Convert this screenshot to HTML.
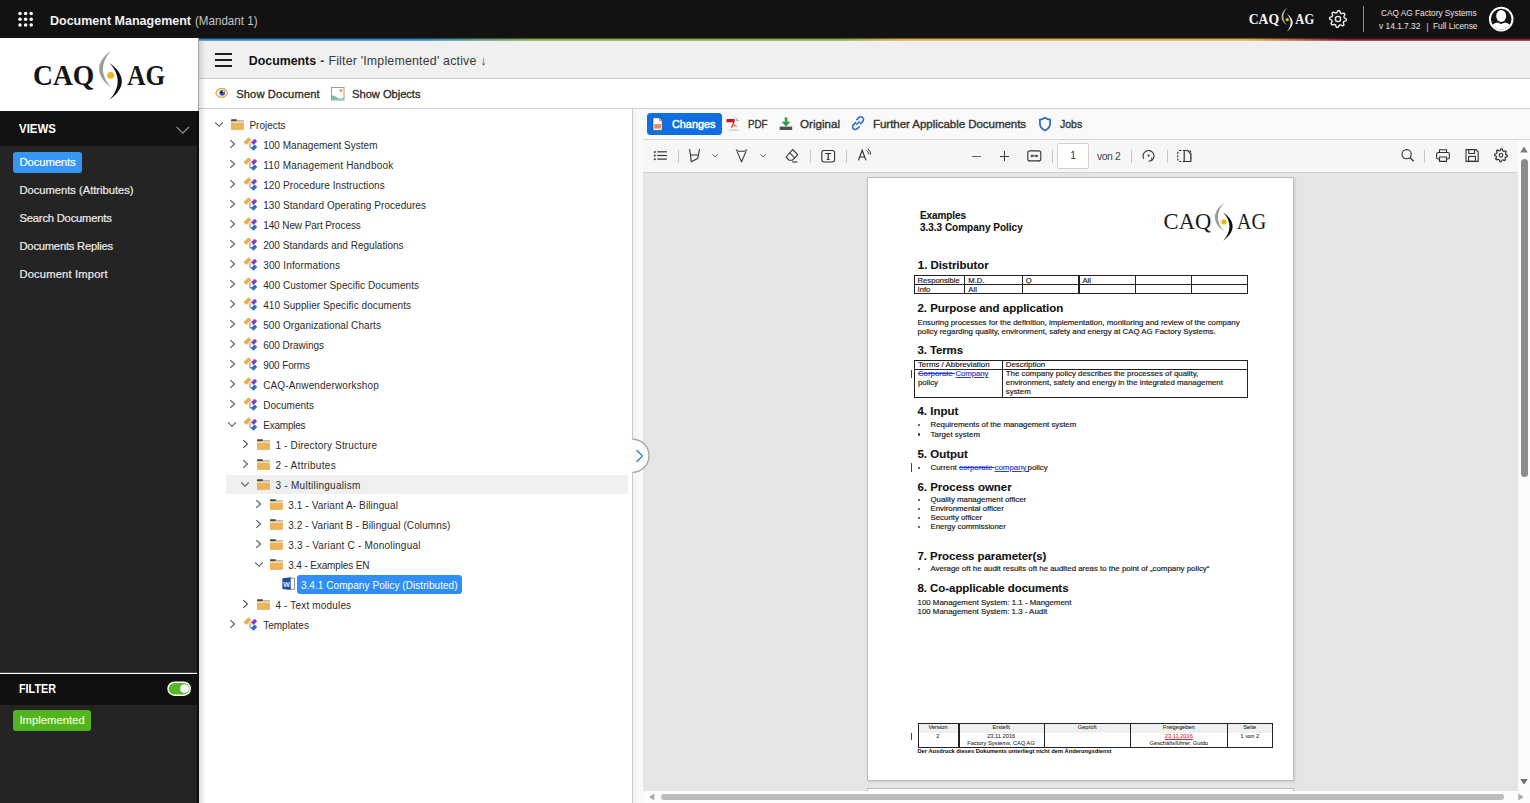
<!DOCTYPE html>
<html><head><meta charset="utf-8"><style>
html,body{margin:0;padding:0;width:1530px;height:803px;overflow:hidden;background:#fff;position:relative}
.t{position:absolute;white-space:nowrap}
svg{overflow:visible}
</style></head><body>
<div style="position:absolute;left:0px;top:0px;width:1530px;height:38px;background:#121212;"></div><svg style="position:absolute;left:0px;top:0px;" width="40" height="38" viewBox="0 0 40 38"><circle cx="20" cy="13.5" r="1.75" fill="#fff"/><circle cx="20" cy="19.2" r="1.75" fill="#fff"/><circle cx="20" cy="25" r="1.75" fill="#fff"/><circle cx="25.6" cy="13.5" r="1.75" fill="#fff"/><circle cx="25.6" cy="19.2" r="1.75" fill="#fff"/><circle cx="25.6" cy="25" r="1.75" fill="#fff"/><circle cx="31.2" cy="13.5" r="1.75" fill="#fff"/><circle cx="31.2" cy="19.2" r="1.75" fill="#fff"/><circle cx="31.2" cy="25" r="1.75" fill="#fff"/></svg><svg style="position:absolute;left:0;top:0" width="1530" height="803"><g transform="translate(1232.4,-17.6) scale(0.495)"><text x="33" y="84.5" font-family="Liberation Serif" font-weight="bold" font-size="28.6" fill="#f5f5f5" textLength="61.3" lengthAdjust="spacingAndGlyphs">CAQ</text><text x="127.2" y="84.5" font-family="Liberation Serif" font-weight="bold" font-size="28.6" fill="#f5f5f5" textLength="37.9" lengthAdjust="spacingAndGlyphs">AG</text><path d="M111.1,50.6 C95.1,62.6 95.1,75.6 111.1,87.6 C100.2,75.6 100.2,62.6 111.1,50.6Z" fill="#b5b5b5"/><path d="M109.6,62.9 C126,74.9 126,87.6 109.6,99.6 C120.5,87.6 120.5,74.9 109.6,62.9Z" fill="#f0f0f0"/><circle cx="110.7" cy="75.3" r="3.4" fill="#f2b21a"/></g></svg><svg style="position:absolute;left:1320px;top:0px;" width="40" height="38" viewBox="0 0 40 38"><path d="M18.00,10.60 L19.64,10.76 L20.45,13.09 L21.56,13.68 L23.94,13.06 L24.98,14.33 L23.91,16.55 L24.28,17.75 L26.40,19.00 L26.24,20.64 L23.91,21.45 L23.32,22.56 L23.94,24.94 L22.67,25.98 L20.45,24.91 L19.25,25.28 L18.00,27.40 L16.36,27.24 L15.55,24.91 L14.44,24.32 L12.06,24.94 L11.02,23.67 L12.09,21.45 L11.72,20.25 L9.60,19.00 L9.76,17.36 L12.09,16.55 L12.68,15.44 L12.06,13.06 L13.33,12.02 L15.55,13.09 L16.75,12.72Z" fill="none" stroke="#f0f0f0" stroke-width="1.4" stroke-linejoin="round"/><circle cx="18" cy="19" r="2.6" fill="none" stroke="#f0f0f0" stroke-width="1.4"/></svg><div style="position:absolute;left:1362.5px;top:6px;width:1.5px;height:26px;background:#8a8a8a;"></div><svg style="position:absolute;left:1486px;top:4px;" width="32" height="32" viewBox="0 0 32 32"><circle cx="15.2" cy="15.1" r="11.3" fill="#121212" stroke="#fff" stroke-width="2"/><clipPath id="avc"><circle cx="15.2" cy="15.1" r="10.3"/></clipPath><g clip-path="url(#avc)" fill="#fff"><ellipse cx="15.2" cy="12" rx="5" ry="6"/><path d="M2,30 C2.5,21.5 7.5,19.5 11.5,18.6 L15.2,20 L18.9,18.6 C22.9,19.5 27.9,21.5 28.4,30Z"/></g></svg><div style="position:absolute;left:199px;top:38px;width:1331px;height:3px;background:linear-gradient(90deg,#3282c0 0%,#3282c0 16%,#86a94f 25%,#86a94f 48%,#e2a850 53%,#e2a850 79%,#8a1c30 86%,#8a1c30 100%);"></div><div style="position:absolute;left:199px;top:38px;width:1331px;height:3px;background:linear-gradient(180deg,rgba(0,0,0,0.45) 0%,rgba(0,0,0,0.45) 33.3%,rgba(0,0,0,0) 33.3%,rgba(0,0,0,0) 66.6%,rgba(255,255,255,0.22) 66.6%);"></div><div style="position:absolute;left:199px;top:41px;width:1331px;height:1px;background:rgba(255,255,255,0.75);"></div><div style="position:absolute;left:0px;top:38px;width:198px;height:73px;background:#ffffff;"></div><div style="position:absolute;left:0px;top:111px;width:198px;height:35px;background:#121212;"></div><div style="position:absolute;left:0px;top:146px;width:198px;height:526px;background:#242424;"></div><div style="position:absolute;left:0px;top:672px;width:197px;height:1px;background:#474747;"></div><div style="position:absolute;left:0px;top:673.5px;width:198px;height:31px;background:#101010;"></div><div style="position:absolute;left:0px;top:704.5px;width:198px;height:99px;background:#242424;"></div><svg style="position:absolute;left:170px;top:120px;" width="24" height="20" viewBox="0 0 24 20"><path d="M6.5,6.8 L12.8,13.1 L19,6.8" fill="none" stroke="#9a9a9a" stroke-width="1.1"/></svg><div style="position:absolute;left:12.8px;top:152px;width:69px;height:21px;background:#3596f5;border-radius:3px"></div><svg style="position:absolute;left:166px;top:680px;" width="28" height="18" viewBox="0 0 28 18"><rect x="2" y="2.2" width="22.3" height="13" rx="6.5" fill="#58b82a" stroke="#ffffff" stroke-width="1.4"/><circle cx="18.5" cy="8.7" r="4.4" fill="#fff"/></svg><div style="position:absolute;left:13px;top:710px;width:78px;height:21px;background:#52b51f;border-radius:3px"></div><div style="position:absolute;left:199px;top:41px;width:1331px;height:37px;background:#f0f0f0;"></div><div style="position:absolute;left:199px;top:78px;width:1331px;height:1px;background:#c9c9c9;"></div><div style="position:absolute;left:199px;top:79px;width:1331px;height:29px;background:#ffffff;"></div><div style="position:absolute;left:199px;top:108px;width:1331px;height:1px;background:#d0d0d0;"></div><div style="position:absolute;left:198px;top:38px;width:1px;height:765px;background:#a6a6a6;"></div><div style="position:absolute;left:196.8px;top:111px;width:1.8px;height:692px;background:#0e0e0e;"></div><div style="position:absolute;left:199px;top:41px;width:7px;height:762px;background:linear-gradient(90deg,rgba(0,0,0,0.13),rgba(0,0,0,0));"></div><svg style="position:absolute;left:0;top:0" width="1530" height="803"><g transform="translate(0,0) scale(1)"><text x="33" y="84.5" font-family="Liberation Serif" font-weight="bold" font-size="28.6" fill="#141414" textLength="61.3" lengthAdjust="spacingAndGlyphs">CAQ</text><text x="127.2" y="84.5" font-family="Liberation Serif" font-weight="bold" font-size="28.6" fill="#141414" textLength="37.9" lengthAdjust="spacingAndGlyphs">AG</text><path d="M111.1,50.6 C95.1,62.6 95.1,75.6 111.1,87.6 C100.2,75.6 100.2,62.6 111.1,50.6Z" fill="#9a9a96"/><path d="M109.6,62.9 C126,74.9 126,87.6 109.6,99.6 C120.5,87.6 120.5,74.9 109.6,62.9Z" fill="#111"/><circle cx="110.7" cy="75.3" r="3.4" fill="#f2b21a"/></g></svg><div style="position:absolute;left:215px;top:53.2px;width:16.5px;height:1.8px;background:#1e1e1e;"></div><div style="position:absolute;left:215px;top:59.2px;width:16.5px;height:1.8px;background:#1e1e1e;"></div><div style="position:absolute;left:215px;top:65.2px;width:16.5px;height:1.8px;background:#1e1e1e;"></div><svg style="position:absolute;left:213px;top:85px;" width="20" height="16" viewBox="0 0 20 16"><path d="M2.9,8 C4.2,4.2 7,3.6 8.7,3.6 C10.4,3.6 13.2,4.2 14.5,8 C13.2,11.8 10.4,12.3 8.7,12.3 C7,12.3 4.2,11.8 2.9,8Z" fill="#fff" stroke="#e8ad55" stroke-width="1.5"/><circle cx="9.2" cy="7.8" r="2.9" fill="#3d6694"/><circle cx="8.9" cy="7.3" r="1.3" fill="#0d1a2a"/><circle cx="10.3" cy="6.4" r="0.8" fill="#fff"/></svg><svg style="position:absolute;left:329px;top:85px;" width="18" height="17" viewBox="0 0 18 17"><rect x="2.5" y="2.5" width="12.5" height="12.5" fill="#fff" stroke="#9a9a9a" stroke-width="1"/><path d="M3,14.6 L3,10.2 C5.2,10.6 7.5,12.4 9.5,13.2 C11.5,13.8 13.2,13.4 14.5,12.6 L14.5,14.6Z" fill="#6cc0a6"/><circle cx="11.9" cy="5.6" r="1.5" fill="#f2a23a"/></svg><div style="position:absolute;left:226px;top:475px;width:402px;height:19px;background:#efefef;"></div><div style="position:absolute;left:297.3px;top:574.5px;width:165px;height:19.3px;background:#2f8ff5;border-radius:3px"></div><svg style="position:absolute;left:213.0px;top:119.5px;" width="12" height="10" viewBox="0 0 12 10"><path d="M2.2,2.3 L6,6.3 L9.8,2.3" fill="none" stroke="#555" stroke-width="1.1"/></svg><svg style="position:absolute;left:231.0px;top:119px;" width="14" height="12" viewBox="0 0 14 12"><rect x="0" y="0.2" width="6" height="2.3" rx="0.8" fill="#454545"/><rect x="5.5" y="1.2" width="7.4" height="1.6" fill="#a9a9a9"/><rect x="0" y="2.5" width="12.9" height="1.5" fill="#f7dca0"/><rect x="0" y="4" width="12.9" height="6.9" fill="#e9b45c"/></svg><svg style="position:absolute;left:228.0px;top:138.3px;" width="10" height="12" viewBox="0 0 10 12"><path d="M2.3,2.2 L6.5,6 L2.3,9.8" fill="none" stroke="#555" stroke-width="1.1"/></svg><svg style="position:absolute;left:244.0px;top:137px;" width="14" height="14" viewBox="0 0 14 14"><rect x="-3.5" y="-2" width="7" height="4" fill="#eab04f" transform="translate(3.4,4.1) rotate(-45)"/><path d="M6,5.6 V10.6 H8.6" fill="none" stroke="#8a8a8a" stroke-width="1.1"/><rect x="-2.6" y="-1.8" width="5.2" height="3.6" fill="#8a3fc0" transform="translate(10.1,4.8) rotate(-45)"/><rect x="-2.6" y="-1.8" width="5.2" height="3.6" fill="#2f6eb5" transform="translate(10.1,10.6) rotate(-45)"/></svg><svg style="position:absolute;left:228.0px;top:158.3px;" width="10" height="12" viewBox="0 0 10 12"><path d="M2.3,2.2 L6.5,6 L2.3,9.8" fill="none" stroke="#555" stroke-width="1.1"/></svg><svg style="position:absolute;left:244.0px;top:157px;" width="14" height="14" viewBox="0 0 14 14"><rect x="-3.5" y="-2" width="7" height="4" fill="#eab04f" transform="translate(3.4,4.1) rotate(-45)"/><path d="M6,5.6 V10.6 H8.6" fill="none" stroke="#8a8a8a" stroke-width="1.1"/><rect x="-2.6" y="-1.8" width="5.2" height="3.6" fill="#8a3fc0" transform="translate(10.1,4.8) rotate(-45)"/><rect x="-2.6" y="-1.8" width="5.2" height="3.6" fill="#2f6eb5" transform="translate(10.1,10.6) rotate(-45)"/></svg><svg style="position:absolute;left:228.0px;top:178.3px;" width="10" height="12" viewBox="0 0 10 12"><path d="M2.3,2.2 L6.5,6 L2.3,9.8" fill="none" stroke="#555" stroke-width="1.1"/></svg><svg style="position:absolute;left:244.0px;top:177px;" width="14" height="14" viewBox="0 0 14 14"><rect x="-3.5" y="-2" width="7" height="4" fill="#eab04f" transform="translate(3.4,4.1) rotate(-45)"/><path d="M6,5.6 V10.6 H8.6" fill="none" stroke="#8a8a8a" stroke-width="1.1"/><rect x="-2.6" y="-1.8" width="5.2" height="3.6" fill="#8a3fc0" transform="translate(10.1,4.8) rotate(-45)"/><rect x="-2.6" y="-1.8" width="5.2" height="3.6" fill="#2f6eb5" transform="translate(10.1,10.6) rotate(-45)"/></svg><svg style="position:absolute;left:228.0px;top:198.3px;" width="10" height="12" viewBox="0 0 10 12"><path d="M2.3,2.2 L6.5,6 L2.3,9.8" fill="none" stroke="#555" stroke-width="1.1"/></svg><svg style="position:absolute;left:244.0px;top:197px;" width="14" height="14" viewBox="0 0 14 14"><rect x="-3.5" y="-2" width="7" height="4" fill="#eab04f" transform="translate(3.4,4.1) rotate(-45)"/><path d="M6,5.6 V10.6 H8.6" fill="none" stroke="#8a8a8a" stroke-width="1.1"/><rect x="-2.6" y="-1.8" width="5.2" height="3.6" fill="#8a3fc0" transform="translate(10.1,4.8) rotate(-45)"/><rect x="-2.6" y="-1.8" width="5.2" height="3.6" fill="#2f6eb5" transform="translate(10.1,10.6) rotate(-45)"/></svg><svg style="position:absolute;left:228.0px;top:218.3px;" width="10" height="12" viewBox="0 0 10 12"><path d="M2.3,2.2 L6.5,6 L2.3,9.8" fill="none" stroke="#555" stroke-width="1.1"/></svg><svg style="position:absolute;left:244.0px;top:217px;" width="14" height="14" viewBox="0 0 14 14"><rect x="-3.5" y="-2" width="7" height="4" fill="#eab04f" transform="translate(3.4,4.1) rotate(-45)"/><path d="M6,5.6 V10.6 H8.6" fill="none" stroke="#8a8a8a" stroke-width="1.1"/><rect x="-2.6" y="-1.8" width="5.2" height="3.6" fill="#8a3fc0" transform="translate(10.1,4.8) rotate(-45)"/><rect x="-2.6" y="-1.8" width="5.2" height="3.6" fill="#2f6eb5" transform="translate(10.1,10.6) rotate(-45)"/></svg><svg style="position:absolute;left:228.0px;top:238.3px;" width="10" height="12" viewBox="0 0 10 12"><path d="M2.3,2.2 L6.5,6 L2.3,9.8" fill="none" stroke="#555" stroke-width="1.1"/></svg><svg style="position:absolute;left:244.0px;top:237px;" width="14" height="14" viewBox="0 0 14 14"><rect x="-3.5" y="-2" width="7" height="4" fill="#eab04f" transform="translate(3.4,4.1) rotate(-45)"/><path d="M6,5.6 V10.6 H8.6" fill="none" stroke="#8a8a8a" stroke-width="1.1"/><rect x="-2.6" y="-1.8" width="5.2" height="3.6" fill="#8a3fc0" transform="translate(10.1,4.8) rotate(-45)"/><rect x="-2.6" y="-1.8" width="5.2" height="3.6" fill="#2f6eb5" transform="translate(10.1,10.6) rotate(-45)"/></svg><svg style="position:absolute;left:228.0px;top:258.3px;" width="10" height="12" viewBox="0 0 10 12"><path d="M2.3,2.2 L6.5,6 L2.3,9.8" fill="none" stroke="#555" stroke-width="1.1"/></svg><svg style="position:absolute;left:244.0px;top:257px;" width="14" height="14" viewBox="0 0 14 14"><rect x="-3.5" y="-2" width="7" height="4" fill="#eab04f" transform="translate(3.4,4.1) rotate(-45)"/><path d="M6,5.6 V10.6 H8.6" fill="none" stroke="#8a8a8a" stroke-width="1.1"/><rect x="-2.6" y="-1.8" width="5.2" height="3.6" fill="#8a3fc0" transform="translate(10.1,4.8) rotate(-45)"/><rect x="-2.6" y="-1.8" width="5.2" height="3.6" fill="#2f6eb5" transform="translate(10.1,10.6) rotate(-45)"/></svg><svg style="position:absolute;left:228.0px;top:278.3px;" width="10" height="12" viewBox="0 0 10 12"><path d="M2.3,2.2 L6.5,6 L2.3,9.8" fill="none" stroke="#555" stroke-width="1.1"/></svg><svg style="position:absolute;left:244.0px;top:277px;" width="14" height="14" viewBox="0 0 14 14"><rect x="-3.5" y="-2" width="7" height="4" fill="#eab04f" transform="translate(3.4,4.1) rotate(-45)"/><path d="M6,5.6 V10.6 H8.6" fill="none" stroke="#8a8a8a" stroke-width="1.1"/><rect x="-2.6" y="-1.8" width="5.2" height="3.6" fill="#8a3fc0" transform="translate(10.1,4.8) rotate(-45)"/><rect x="-2.6" y="-1.8" width="5.2" height="3.6" fill="#2f6eb5" transform="translate(10.1,10.6) rotate(-45)"/></svg><svg style="position:absolute;left:228.0px;top:298.3px;" width="10" height="12" viewBox="0 0 10 12"><path d="M2.3,2.2 L6.5,6 L2.3,9.8" fill="none" stroke="#555" stroke-width="1.1"/></svg><svg style="position:absolute;left:244.0px;top:297px;" width="14" height="14" viewBox="0 0 14 14"><rect x="-3.5" y="-2" width="7" height="4" fill="#eab04f" transform="translate(3.4,4.1) rotate(-45)"/><path d="M6,5.6 V10.6 H8.6" fill="none" stroke="#8a8a8a" stroke-width="1.1"/><rect x="-2.6" y="-1.8" width="5.2" height="3.6" fill="#8a3fc0" transform="translate(10.1,4.8) rotate(-45)"/><rect x="-2.6" y="-1.8" width="5.2" height="3.6" fill="#2f6eb5" transform="translate(10.1,10.6) rotate(-45)"/></svg><svg style="position:absolute;left:228.0px;top:318.3px;" width="10" height="12" viewBox="0 0 10 12"><path d="M2.3,2.2 L6.5,6 L2.3,9.8" fill="none" stroke="#555" stroke-width="1.1"/></svg><svg style="position:absolute;left:244.0px;top:317px;" width="14" height="14" viewBox="0 0 14 14"><rect x="-3.5" y="-2" width="7" height="4" fill="#eab04f" transform="translate(3.4,4.1) rotate(-45)"/><path d="M6,5.6 V10.6 H8.6" fill="none" stroke="#8a8a8a" stroke-width="1.1"/><rect x="-2.6" y="-1.8" width="5.2" height="3.6" fill="#8a3fc0" transform="translate(10.1,4.8) rotate(-45)"/><rect x="-2.6" y="-1.8" width="5.2" height="3.6" fill="#2f6eb5" transform="translate(10.1,10.6) rotate(-45)"/></svg><svg style="position:absolute;left:228.0px;top:338.3px;" width="10" height="12" viewBox="0 0 10 12"><path d="M2.3,2.2 L6.5,6 L2.3,9.8" fill="none" stroke="#555" stroke-width="1.1"/></svg><svg style="position:absolute;left:244.0px;top:337px;" width="14" height="14" viewBox="0 0 14 14"><rect x="-3.5" y="-2" width="7" height="4" fill="#eab04f" transform="translate(3.4,4.1) rotate(-45)"/><path d="M6,5.6 V10.6 H8.6" fill="none" stroke="#8a8a8a" stroke-width="1.1"/><rect x="-2.6" y="-1.8" width="5.2" height="3.6" fill="#8a3fc0" transform="translate(10.1,4.8) rotate(-45)"/><rect x="-2.6" y="-1.8" width="5.2" height="3.6" fill="#2f6eb5" transform="translate(10.1,10.6) rotate(-45)"/></svg><svg style="position:absolute;left:228.0px;top:358.3px;" width="10" height="12" viewBox="0 0 10 12"><path d="M2.3,2.2 L6.5,6 L2.3,9.8" fill="none" stroke="#555" stroke-width="1.1"/></svg><svg style="position:absolute;left:244.0px;top:357px;" width="14" height="14" viewBox="0 0 14 14"><rect x="-3.5" y="-2" width="7" height="4" fill="#eab04f" transform="translate(3.4,4.1) rotate(-45)"/><path d="M6,5.6 V10.6 H8.6" fill="none" stroke="#8a8a8a" stroke-width="1.1"/><rect x="-2.6" y="-1.8" width="5.2" height="3.6" fill="#8a3fc0" transform="translate(10.1,4.8) rotate(-45)"/><rect x="-2.6" y="-1.8" width="5.2" height="3.6" fill="#2f6eb5" transform="translate(10.1,10.6) rotate(-45)"/></svg><svg style="position:absolute;left:228.0px;top:378.3px;" width="10" height="12" viewBox="0 0 10 12"><path d="M2.3,2.2 L6.5,6 L2.3,9.8" fill="none" stroke="#555" stroke-width="1.1"/></svg><svg style="position:absolute;left:244.0px;top:377px;" width="14" height="14" viewBox="0 0 14 14"><rect x="-3.5" y="-2" width="7" height="4" fill="#eab04f" transform="translate(3.4,4.1) rotate(-45)"/><path d="M6,5.6 V10.6 H8.6" fill="none" stroke="#8a8a8a" stroke-width="1.1"/><rect x="-2.6" y="-1.8" width="5.2" height="3.6" fill="#8a3fc0" transform="translate(10.1,4.8) rotate(-45)"/><rect x="-2.6" y="-1.8" width="5.2" height="3.6" fill="#2f6eb5" transform="translate(10.1,10.6) rotate(-45)"/></svg><svg style="position:absolute;left:228.0px;top:398.3px;" width="10" height="12" viewBox="0 0 10 12"><path d="M2.3,2.2 L6.5,6 L2.3,9.8" fill="none" stroke="#555" stroke-width="1.1"/></svg><svg style="position:absolute;left:244.0px;top:397px;" width="14" height="14" viewBox="0 0 14 14"><rect x="-3.5" y="-2" width="7" height="4" fill="#eab04f" transform="translate(3.4,4.1) rotate(-45)"/><path d="M6,5.6 V10.6 H8.6" fill="none" stroke="#8a8a8a" stroke-width="1.1"/><rect x="-2.6" y="-1.8" width="5.2" height="3.6" fill="#8a3fc0" transform="translate(10.1,4.8) rotate(-45)"/><rect x="-2.6" y="-1.8" width="5.2" height="3.6" fill="#2f6eb5" transform="translate(10.1,10.6) rotate(-45)"/></svg><svg style="position:absolute;left:226.2px;top:419.5px;" width="12" height="10" viewBox="0 0 12 10"><path d="M2.2,2.3 L6,6.3 L9.8,2.3" fill="none" stroke="#555" stroke-width="1.1"/></svg><svg style="position:absolute;left:244.0px;top:417px;" width="14" height="14" viewBox="0 0 14 14"><rect x="-3.5" y="-2" width="7" height="4" fill="#eab04f" transform="translate(3.4,4.1) rotate(-45)"/><path d="M6,5.6 V10.6 H8.6" fill="none" stroke="#8a8a8a" stroke-width="1.1"/><rect x="-2.6" y="-1.8" width="5.2" height="3.6" fill="#8a3fc0" transform="translate(10.1,4.8) rotate(-45)"/><rect x="-2.6" y="-1.8" width="5.2" height="3.6" fill="#2f6eb5" transform="translate(10.1,10.6) rotate(-45)"/></svg><svg style="position:absolute;left:240.85px;top:438.3px;" width="10" height="12" viewBox="0 0 10 12"><path d="M2.3,2.2 L6.5,6 L2.3,9.8" fill="none" stroke="#555" stroke-width="1.1"/></svg><svg style="position:absolute;left:256.8px;top:439px;" width="14" height="12" viewBox="0 0 14 12"><rect x="0" y="0.2" width="6" height="2.3" rx="0.8" fill="#454545"/><rect x="5.5" y="1.2" width="7.4" height="1.6" fill="#a9a9a9"/><rect x="0" y="2.5" width="12.9" height="1.5" fill="#f7dca0"/><rect x="0" y="4" width="12.9" height="6.9" fill="#e9b45c"/></svg><svg style="position:absolute;left:240.85px;top:458.3px;" width="10" height="12" viewBox="0 0 10 12"><path d="M2.3,2.2 L6.5,6 L2.3,9.8" fill="none" stroke="#555" stroke-width="1.1"/></svg><svg style="position:absolute;left:256.8px;top:459px;" width="14" height="12" viewBox="0 0 14 12"><rect x="0" y="0.2" width="6" height="2.3" rx="0.8" fill="#454545"/><rect x="5.5" y="1.2" width="7.4" height="1.6" fill="#a9a9a9"/><rect x="0" y="2.5" width="12.9" height="1.5" fill="#f7dca0"/><rect x="0" y="4" width="12.9" height="6.9" fill="#e9b45c"/></svg><svg style="position:absolute;left:239.4px;top:479.5px;" width="12" height="10" viewBox="0 0 12 10"><path d="M2.2,2.3 L6,6.3 L9.8,2.3" fill="none" stroke="#555" stroke-width="1.1"/></svg><svg style="position:absolute;left:256.8px;top:479px;" width="14" height="12" viewBox="0 0 14 12"><rect x="0" y="0.2" width="6" height="2.3" rx="0.8" fill="#454545"/><rect x="5.5" y="1.2" width="7.4" height="1.6" fill="#a9a9a9"/><rect x="0" y="2.5" width="12.9" height="1.5" fill="#f7dca0"/><rect x="0" y="4" width="12.9" height="6.9" fill="#e9b45c"/></svg><svg style="position:absolute;left:253.7px;top:498.3px;" width="10" height="12" viewBox="0 0 10 12"><path d="M2.3,2.2 L6.5,6 L2.3,9.8" fill="none" stroke="#555" stroke-width="1.1"/></svg><svg style="position:absolute;left:269.7px;top:499px;" width="14" height="12" viewBox="0 0 14 12"><rect x="0" y="0.2" width="6" height="2.3" rx="0.8" fill="#454545"/><rect x="5.5" y="1.2" width="7.4" height="1.6" fill="#a9a9a9"/><rect x="0" y="2.5" width="12.9" height="1.5" fill="#f7dca0"/><rect x="0" y="4" width="12.9" height="6.9" fill="#e9b45c"/></svg><svg style="position:absolute;left:253.7px;top:518.3px;" width="10" height="12" viewBox="0 0 10 12"><path d="M2.3,2.2 L6.5,6 L2.3,9.8" fill="none" stroke="#555" stroke-width="1.1"/></svg><svg style="position:absolute;left:269.7px;top:519px;" width="14" height="12" viewBox="0 0 14 12"><rect x="0" y="0.2" width="6" height="2.3" rx="0.8" fill="#454545"/><rect x="5.5" y="1.2" width="7.4" height="1.6" fill="#a9a9a9"/><rect x="0" y="2.5" width="12.9" height="1.5" fill="#f7dca0"/><rect x="0" y="4" width="12.9" height="6.9" fill="#e9b45c"/></svg><svg style="position:absolute;left:253.7px;top:538.3px;" width="10" height="12" viewBox="0 0 10 12"><path d="M2.3,2.2 L6.5,6 L2.3,9.8" fill="none" stroke="#555" stroke-width="1.1"/></svg><svg style="position:absolute;left:269.7px;top:539px;" width="14" height="12" viewBox="0 0 14 12"><rect x="0" y="0.2" width="6" height="2.3" rx="0.8" fill="#454545"/><rect x="5.5" y="1.2" width="7.4" height="1.6" fill="#a9a9a9"/><rect x="0" y="2.5" width="12.9" height="1.5" fill="#f7dca0"/><rect x="0" y="4" width="12.9" height="6.9" fill="#e9b45c"/></svg><svg style="position:absolute;left:252.6px;top:559.5px;" width="12" height="10" viewBox="0 0 12 10"><path d="M2.2,2.3 L6,6.3 L9.8,2.3" fill="none" stroke="#555" stroke-width="1.1"/></svg><svg style="position:absolute;left:269.7px;top:559px;" width="14" height="12" viewBox="0 0 14 12"><rect x="0" y="0.2" width="6" height="2.3" rx="0.8" fill="#454545"/><rect x="5.5" y="1.2" width="7.4" height="1.6" fill="#a9a9a9"/><rect x="0" y="2.5" width="12.9" height="1.5" fill="#f7dca0"/><rect x="0" y="4" width="12.9" height="6.9" fill="#e9b45c"/></svg><svg style="position:absolute;left:282px;top:576.5px;" width="14" height="14" viewBox="0 0 14 14"><path d="M8,1.2 H12.6 V12.2 H8Z" fill="#fff" stroke="#6f7f9a" stroke-width="0.9"/><path d="M0.4,1.2 L8.6,0.2 V13 L0.4,12Z" fill="#1f4f9a"/><text x="1.3" y="9.6" font-family="Liberation Sans" font-weight="bold" font-size="7" fill="#e8f0ff">W</text></svg><svg style="position:absolute;left:240.85px;top:598.3px;" width="10" height="12" viewBox="0 0 10 12"><path d="M2.3,2.2 L6.5,6 L2.3,9.8" fill="none" stroke="#555" stroke-width="1.1"/></svg><svg style="position:absolute;left:256.8px;top:599px;" width="14" height="12" viewBox="0 0 14 12"><rect x="0" y="0.2" width="6" height="2.3" rx="0.8" fill="#454545"/><rect x="5.5" y="1.2" width="7.4" height="1.6" fill="#a9a9a9"/><rect x="0" y="2.5" width="12.9" height="1.5" fill="#f7dca0"/><rect x="0" y="4" width="12.9" height="6.9" fill="#e9b45c"/></svg><svg style="position:absolute;left:228.0px;top:618.3px;" width="10" height="12" viewBox="0 0 10 12"><path d="M2.3,2.2 L6.5,6 L2.3,9.8" fill="none" stroke="#555" stroke-width="1.1"/></svg><svg style="position:absolute;left:244.0px;top:617px;" width="14" height="14" viewBox="0 0 14 14"><rect x="-3.5" y="-2" width="7" height="4" fill="#eab04f" transform="translate(3.4,4.1) rotate(-45)"/><path d="M6,5.6 V10.6 H8.6" fill="none" stroke="#8a8a8a" stroke-width="1.1"/><rect x="-2.6" y="-1.8" width="5.2" height="3.6" fill="#8a3fc0" transform="translate(10.1,4.8) rotate(-45)"/><rect x="-2.6" y="-1.8" width="5.2" height="3.6" fill="#2f6eb5" transform="translate(10.1,10.6) rotate(-45)"/></svg><div style="position:absolute;left:632px;top:109px;width:1px;height:694px;background:#c9c9c9;"></div><div style="position:absolute;left:633px;top:109px;width:10px;height:694px;background:linear-gradient(90deg,#f3f3f3,#fbfbfb);"></div><div style="position:absolute;left:643px;top:109px;width:887px;height:30px;background:#f9f9f9;"></div><div style="position:absolute;left:643px;top:139px;width:887px;height:1px;background:#d5d5d5;"></div><div style="position:absolute;left:643px;top:140px;width:875px;height:32px;background:#f6f6f6;"></div><div style="position:absolute;left:643px;top:172px;width:875px;height:1px;background:#d2d2d2;"></div><div style="position:absolute;left:643px;top:173px;width:875px;height:617.6px;background:#e5e5e5;"></div><div style="position:absolute;left:646.8px;top:112.8px;width:75px;height:22.2px;background:#0f6fe0;border-radius:3.5px"></div><svg style="position:absolute;left:651px;top:116px;" width="14" height="16" viewBox="0 0 14 16"><path d="M2,1.8 H8.6 L11.2,4.4 V14.4 H2Z" fill="#fff" stroke="#333" stroke-width="0.6"/><path d="M8.6,1.8 V4.4 H11.2" fill="none" stroke="#555" stroke-width="0.7"/><rect x="3.2" y="8.2" width="6.8" height="4.4" fill="#e3866c"/></svg><svg style="position:absolute;left:724px;top:115px;" width="18" height="18" viewBox="0 0 18 18"><rect x="2.5" y="4" width="8.2" height="3.3" fill="#d0141a"/><path d="M9.6,7.2 C9.3,9.5 8.6,11.2 7.4,12.6" fill="none" stroke="#c43a3a" stroke-width="1.4"/><path d="M9.8,9.6 C10.6,10.6 11.6,11.1 12.8,11.3" fill="none" stroke="#c45050" stroke-width="1.1"/><path d="M12.4,2.8 L14.8,6.2 L12.4,6.2Z" fill="#9a9a9a"/><rect x="5" y="14.4" width="10" height="1.3" fill="#c8c8c8"/></svg><svg style="position:absolute;left:778px;top:115px;" width="16" height="16" viewBox="0 0 16 16"><path d="M8,2.4 V9.5" stroke="#2f9e44" stroke-width="2.6"/><path d="M3.5,6.8 L8,11.4 L12.5,6.8Z" fill="#2f9e44"/><rect x="1.6" y="11.6" width="12.6" height="3.4" fill="#4f4f4f"/></svg><svg style="position:absolute;left:850px;top:115px;" width="16" height="16" viewBox="0 0 16 16"><g fill="none" stroke="#2d6fc4" stroke-width="1.6" stroke-linecap="round"><path d="M6.8,9.3 L9.4,6.7"/><path d="M5.6,7.6 L3.6,9.6 C2.2,11 2.4,12.8 3.6,13.8 C4.8,14.9 6.3,14.6 7.6,13.4 L9.2,11.8"/><path d="M10.6,8.6 L12.6,6.6 C13.9,5.2 13.8,3.6 12.6,2.5 C11.4,1.5 9.8,1.6 8.5,2.9 L6.9,4.6"/></g></svg><svg style="position:absolute;left:1038px;top:116px;" width="14" height="16" viewBox="0 0 14 16"><path d="M7,1.6 C5,3.1 3.3,3.6 1.9,3.6 V7.6 C1.9,11.2 4.4,13.4 7,14.6 C9.6,13.4 12.1,11.2 12.1,7.6 V3.6 C10.7,3.6 9,3.1 7,1.6Z" fill="none" stroke="#2d68b5" stroke-width="1.7"/></svg><svg style="position:absolute;left:650px;top:146px;" width="20" height="16" viewBox="0 0 20 16"><g fill="#333333"><circle cx="4.8" cy="5.9" r="1"/><circle cx="4.8" cy="9.6" r="1"/><circle cx="4.8" cy="13.2" r="1"/><rect x="7.3" y="5.2" width="9.6" height="1.2"/><rect x="7.3" y="8.9" width="9.6" height="1.2"/><rect x="7.3" y="12.5" width="9.6" height="1.2"/></g></svg><div style="position:absolute;left:678px;top:149.5px;width:1px;height:13px;background:#c4c4c4;"></div><svg style="position:absolute;left:686px;top:146px;" width="18" height="18" viewBox="0 0 18 18"><g fill="none" stroke="#333333" stroke-width="1.1" stroke-linejoin="round"><path d="M3.5,3 L4.5,9 H12.5 L13.5,3"/><path d="M4.5,9 L5.2,15.8 L11.6,12.5 L12.5,9"/></g></svg><svg style="position:absolute;left:709px;top:151px;" width="12" height="8" viewBox="0 0 12 8"><path d="M3.4,3.2 L6.1,5.9 L8.8,3.2" fill="none" stroke="#666" stroke-width="1"/></svg><svg style="position:absolute;left:733px;top:146px;" width="18" height="18" viewBox="0 0 18 18"><g fill="none" stroke="#333333" stroke-width="1.1" stroke-linejoin="round"><path d="M3,3.4 C3.4,4.5 4.5,5.2 6,5.2 H11 C12.5,5.2 13.6,4.5 14,3.4"/><path d="M4,5.4 L8.5,15.9 L13,5.4"/></g></svg><svg style="position:absolute;left:757px;top:151px;" width="12" height="8" viewBox="0 0 12 8"><path d="M3.4,3.2 L6.1,5.9 L8.8,3.2" fill="none" stroke="#666" stroke-width="1"/></svg><svg style="position:absolute;left:783px;top:146px;" width="18" height="18" viewBox="0 0 18 18"><g fill="none" stroke="#333333" stroke-width="1.1" stroke-linejoin="round"><path d="M9.6,3.5 L14.8,8.6 L9.2,14.3 H6.3 L3,11 Z"/><path d="M6.5,6.7 L11.7,11.9"/><path d="M9.2,16 H14.5"/></g></svg><div style="position:absolute;left:810px;top:149.5px;width:1px;height:13px;background:#c4c4c4;"></div><svg style="position:absolute;left:819px;top:147px;" width="18" height="18" viewBox="0 0 18 18"><rect x="2.8" y="3.5" width="12.8" height="11.5" rx="2.4" fill="none" stroke="#333333" stroke-width="1.1"/><path d="M6.2,6.5 H12.2 M9.2,6.5 V12.5 M7.8,12.5 H10.6" fill="none" stroke="#333333" stroke-width="1.2"/></svg><div style="position:absolute;left:846px;top:149.5px;width:1px;height:13px;background:#c4c4c4;"></div><svg style="position:absolute;left:855px;top:146px;" width="20" height="18" viewBox="0 0 20 18"><path d="M3.5,14.4 L7.2,4.2 L11,14.4 M4.8,11 H9.7" fill="none" stroke="#333333" stroke-width="1.2"/><path d="M11.5,4.5 C13,5.3 13.6,6.8 13.4,8.3 M12.7,3 C15,4.2 15.8,6.5 15.4,8.6" fill="none" stroke="#333333" stroke-width="1"/></svg><div style="position:absolute;left:972px;top:155.6px;width:8.6px;height:1px;background:#666;"></div><div style="position:absolute;left:1000px;top:155.5px;width:9.4px;height:1px;background:#333333;"></div><div style="position:absolute;left:1004.2px;top:151.3px;width:1px;height:9.4px;background:#333333;"></div><svg style="position:absolute;left:1025px;top:148px;" width="18" height="16" viewBox="0 0 18 16"><rect x="2.8" y="2.9" width="13" height="10" rx="2" fill="none" stroke="#333333" stroke-width="1.1"/><path d="M5.2,7.9 L7.4,6.2 V9.6Z M13.4,7.9 L11.2,6.2 V9.6Z" fill="#333333"/><rect x="7" y="7.3" width="4.6" height="1.2" fill="#333333"/></svg><div style="position:absolute;left:1051.5px;top:149.5px;width:1px;height:13px;background:#c4c4c4;"></div><div style="position:absolute;left:1057.3px;top:143.3px;width:31.4px;height:25.4px;background:#ffffff;border:1px solid #d2d2d2;border-radius:2px;box-sizing:border-box"></div><div style="position:absolute;left:1130.6px;top:149.5px;width:1px;height:13px;background:#c4c4c4;"></div><svg style="position:absolute;left:1139px;top:146px;" width="20" height="18" viewBox="0 0 20 18"><path d="M4.9,13 A5.5,5.5 0 1 1 12.6,14.6" fill="none" stroke="#333333" stroke-width="1.1"/><path d="M9.6,15.2 L12.7,14.6 L12.9,11.6" fill="none" stroke="#333333" stroke-width="1.1"/><circle cx="9.6" cy="9.6" r="1.1" fill="#333333"/></svg><div style="position:absolute;left:1166.5px;top:149.5px;width:1px;height:13px;background:#c4c4c4;"></div><svg style="position:absolute;left:1175px;top:147px;" width="18" height="18" viewBox="0 0 18 18"><rect x="2.8" y="3.5" width="13" height="11" rx="1.8" fill="none" stroke="#333333" stroke-width="1.2" stroke-dasharray="2,1.3"/><path d="M9.2,3.5 H12.5 L15.8,6.8 V14.5 H9.2Z" fill="#f6f6f6" stroke="#333333" stroke-width="1.2"/></svg><svg style="position:absolute;left:1399px;top:146px;" width="18" height="18" viewBox="0 0 18 18"><circle cx="7.6" cy="8.2" r="4.6" fill="none" stroke="#333333" stroke-width="1.1"/><path d="M11,11.6 L14.6,15.3" stroke="#333333" stroke-width="1.4"/></svg><div style="position:absolute;left:1424.4px;top:149.5px;width:1px;height:13px;background:#c4c4c4;"></div><svg style="position:absolute;left:1434px;top:146px;" width="18" height="18" viewBox="0 0 18 18"><g fill="none" stroke="#333333" stroke-width="1.1"><path d="M5.5,6.5 V3.8 H12.5 V6.5"/><rect x="2.6" y="6.5" width="12.8" height="6.5" rx="1.6"/><path d="M5.5,11 H12.5 V15.4 H5.5Z" fill="#f6f6f6"/></g></svg><svg style="position:absolute;left:1463px;top:146px;" width="18" height="18" viewBox="0 0 18 18"><g fill="none" stroke="#333333" stroke-width="1.1"><path d="M3,3.6 H13 L15.2,5.8 V15.4 H3Z"/><path d="M5.8,3.6 V7.5 H11.6 V3.6"/><rect x="5.6" y="10.4" width="6.8" height="5"/></g></svg><svg style="position:absolute;left:1492px;top:146px;" width="18" height="18" viewBox="0 0 18 18"><path d="M9.00,2.90 L10.25,3.02 L10.84,4.87 L11.67,5.31 L13.53,4.77 L14.32,5.74 L13.43,7.46 L13.71,8.36 L15.40,9.30 L15.28,10.55 L13.43,11.14 L12.99,11.97 L13.53,13.83 L12.56,14.62 L10.84,13.73 L9.94,14.01 L9.00,15.70 L7.75,15.58 L7.16,13.73 L6.33,13.29 L4.47,13.83 L3.68,12.86 L4.57,11.14 L4.29,10.24 L2.60,9.30 L2.72,8.05 L4.57,7.46 L5.01,6.63 L4.47,4.77 L5.44,3.98 L7.16,4.87 L8.06,4.59Z" fill="none" stroke="#333333" stroke-width="1.2" stroke-linejoin="round"/><circle cx="9" cy="9.3" r="1.8" fill="none" stroke="#333333" stroke-width="1.2"/></svg><div style="position:absolute;left:1518px;top:140px;width:12px;height:663px;background:#fcfcfc;"></div><div style="position:absolute;left:643px;top:790.6px;width:875px;height:12.4px;background:#fcfcfc;"></div><svg style="position:absolute;left:1518px;top:144px;" width="12" height="10" viewBox="0 0 12 10"><path d="M2.2,8.4 L6,2.6 L9.8,8.4Z" fill="#7a7a7a"/></svg><div style="position:absolute;left:1520.8px;top:158.8px;width:7px;height:318.5px;background:#8b8b8b;border-radius:3.5px"></div><svg style="position:absolute;left:1518px;top:777px;" width="12" height="10" viewBox="0 0 12 10"><path d="M2.2,2 L9.8,2 L6,7.6Z" fill="#707070"/></svg><div style="position:absolute;left:661px;top:793.6px;width:843.4px;height:6.6px;background:#bcbcbc;border-radius:3.3px"></div><svg style="position:absolute;left:646px;top:792px;" width="10" height="10" viewBox="0 0 10 10"><path d="M8.3,1.6 L8.3,8.4 L3,5Z" fill="#a8a8a8"/></svg><svg style="position:absolute;left:1516px;top:792px;" width="10" height="10" viewBox="0 0 10 10"><path d="M2.3,1.6 L2.3,8.4 L7.6,5Z" fill="#a8a8a8"/></svg><div style="position:absolute;left:866.5px;top:177.4px;width:427.5px;height:603.4px;background:#ffffff;border:1px solid #bdbdbd;box-sizing:border-box;box-shadow:1px 1px 2px rgba(0,0,0,0.12)"></div><div style="position:absolute;left:866.5px;top:787.8px;width:427.5px;height:2.8px;background:#ffffff;border:1px solid #bdbdbd;border-bottom:none;box-sizing:border-box"></div><svg style="position:absolute;left:0;top:0" width="1530" height="803"><g transform="translate(1137.96,163.4) scale(0.777)"><text x="33" y="84.5" font-family="Liberation Serif" font-weight="normal" font-size="28.6" fill="#1a1a1a" textLength="61.3" lengthAdjust="spacingAndGlyphs">CAQ</text><text x="127.2" y="84.5" font-family="Liberation Serif" font-weight="normal" font-size="28.6" fill="#1a1a1a" textLength="37.9" lengthAdjust="spacingAndGlyphs">AG</text><path d="M111.1,50.6 C95.1,62.6 95.1,75.6 111.1,87.6 C100.2,75.6 100.2,62.6 111.1,50.6Z" fill="#9a9a96"/><path d="M109.6,62.9 C126,74.9 126,87.6 109.6,99.6 C120.5,87.6 120.5,74.9 109.6,62.9Z" fill="#111"/><circle cx="110.7" cy="75.3" r="3.4" fill="#f2b21a"/></g></svg><div style="position:absolute;left:913.5px;top:274.5px;width:334.40000000000003px;height:1.2px;background:#222;"></div><div style="position:absolute;left:913.5px;top:284.3px;width:334.40000000000003px;height:1.2px;background:#222;"></div><div style="position:absolute;left:913.5px;top:293.2px;width:334.40000000000003px;height:1.2px;background:#222;"></div><div style="position:absolute;left:913.5px;top:274.5px;width:1.2px;height:19.9px;background:#222;"></div><div style="position:absolute;left:964.2px;top:274.5px;width:1.2px;height:19.9px;background:#222;"></div><div style="position:absolute;left:1022px;top:274.5px;width:1.2px;height:19.9px;background:#222;"></div><div style="position:absolute;left:1078.4px;top:274.5px;width:1.2px;height:19.9px;background:#222;"></div><div style="position:absolute;left:1135px;top:274.5px;width:1.2px;height:19.9px;background:#222;"></div><div style="position:absolute;left:1190.5px;top:274.5px;width:1.2px;height:19.9px;background:#222;"></div><div style="position:absolute;left:1246.7px;top:274.5px;width:1.2px;height:19.9px;background:#222;"></div><div style="position:absolute;left:913.5px;top:359.6px;width:334.4px;height:1.2px;background:#222;"></div><div style="position:absolute;left:913.5px;top:368.7px;width:334.4px;height:1.2px;background:#222;"></div><div style="position:absolute;left:913.5px;top:396.8px;width:334.4px;height:1.2px;background:#222;"></div><div style="position:absolute;left:913.5px;top:359.6px;width:1.2px;height:38.4px;background:#222;"></div><div style="position:absolute;left:1001.5px;top:359.6px;width:1.2px;height:38.4px;background:#222;"></div><div style="position:absolute;left:1246.7px;top:359.6px;width:1.2px;height:38.4px;background:#222;"></div><div style="position:absolute;left:910.6px;top:369.7px;width:1.3px;height:8.6px;background:#444;"></div><div style="position:absolute;left:918.2px;top:423.90px;width:2.3px;height:2.3px;border-radius:50%;background:#333"></div><div style="position:absolute;left:918.2px;top:433.40px;width:2.3px;height:2.3px;border-radius:50%;background:#333"></div><div style="position:absolute;left:910.8px;top:463.3px;width:1.3px;height:8.6px;background:#444;"></div><div style="position:absolute;left:918.2px;top:466.50px;width:2.3px;height:2.3px;border-radius:50%;background:#333"></div><div style="position:absolute;left:918.2px;top:499.00px;width:2.3px;height:2.3px;border-radius:50%;background:#333"></div><div style="position:absolute;left:918.2px;top:507.80px;width:2.3px;height:2.3px;border-radius:50%;background:#333"></div><div style="position:absolute;left:918.2px;top:517.00px;width:2.3px;height:2.3px;border-radius:50%;background:#333"></div><div style="position:absolute;left:918.2px;top:526.10px;width:2.3px;height:2.3px;border-radius:50%;background:#333"></div><div style="position:absolute;left:918.2px;top:567.70px;width:2.3px;height:2.3px;border-radius:50%;background:#333"></div><div style="position:absolute;left:917.5px;top:723.2px;width:354.70000000000005px;height:10px;background:#efefef;"></div><div style="position:absolute;left:917.5px;top:723.1px;width:355.90000000000003px;height:1.2px;background:#222;"></div><div style="position:absolute;left:917.5px;top:747.0px;width:355.90000000000003px;height:1.2px;background:#222;"></div><div style="position:absolute;left:917.5px;top:723.1px;width:1.2px;height:25.1px;background:#222;"></div><div style="position:absolute;left:958.4px;top:723.1px;width:1.2px;height:25.1px;background:#222;"></div><div style="position:absolute;left:1044px;top:723.1px;width:1.2px;height:25.1px;background:#222;"></div><div style="position:absolute;left:1130.3px;top:723.1px;width:1.2px;height:25.1px;background:#222;"></div><div style="position:absolute;left:1227.3px;top:723.1px;width:1.2px;height:25.1px;background:#222;"></div><div style="position:absolute;left:1272.2px;top:723.1px;width:1.2px;height:25.1px;background:#222;"></div><div style="position:absolute;left:911px;top:733px;width:1.3px;height:6.6px;background:#444;"></div>
<div class="t" style="left:49.80px;top:13.80px;font:bold 13px/13px 'Liberation Sans', sans-serif;color:#f2f2f2;letter-spacing:0.000px;transform:scaleX(0.9616);transform-origin:0 0;">Document Management</div><div class="t" style="left:195.00px;top:13.80px;font:normal 13px/13px 'Liberation Sans', sans-serif;color:#c4c4c4;letter-spacing:0.000px;transform:scaleX(0.8917);transform-origin:0 0;">(Mandant 1)</div><div class="t" style="left:1381.00px;top:9.13px;font:normal 9.3px/9.3px 'Liberation Sans', sans-serif;color:#e6e6e6;letter-spacing:0.000px;transform:scaleX(0.8892);transform-origin:0 0;">CAQ AG Factory Systems</div><div class="t" style="left:1379.40px;top:22.13px;font:normal 9.3px/9.3px 'Liberation Sans', sans-serif;color:#e6e6e6;letter-spacing:0.000px;transform:scaleX(0.8999);transform-origin:0 0;">v 14.1.7.32</div><div class="t" style="left:1426.20px;top:22.93px;font:normal 9.3px/9.3px 'Liberation Sans', sans-serif;color:#cfcfcf;letter-spacing:0.000px;">|</div><div class="t" style="left:1432.50px;top:22.13px;font:normal 9.3px/9.3px 'Liberation Sans', sans-serif;color:#e6e6e6;letter-spacing:0.000px;transform:scaleX(0.8970);transform-origin:0 0;">Full License</div><div class="t" style="left:19.30px;top:122.93px;font:bold 12.6px/12.6px 'Liberation Sans', sans-serif;color:#ffffff;letter-spacing:0.000px;transform:scaleX(0.9117);transform-origin:0 0;">VIEWS</div><div class="t" style="left:19.60px;top:156.85px;font:normal 11.4px/11.4px 'Liberation Sans', sans-serif;color:#ffffff;letter-spacing:-0.201px;-webkit-text-stroke:0.2px currentColor;">Documents</div><div class="t" style="left:19.50px;top:184.92px;font:normal 11.2px/11.2px 'Liberation Sans', sans-serif;color:#ececec;letter-spacing:-0.019px;-webkit-text-stroke:0.2px currentColor;">Documents (Attributes)</div><div class="t" style="left:19.50px;top:212.92px;font:normal 11.2px/11.2px 'Liberation Sans', sans-serif;color:#ececec;letter-spacing:-0.189px;-webkit-text-stroke:0.2px currentColor;">Search Documents</div><div class="t" style="left:19.50px;top:240.92px;font:normal 11.2px/11.2px 'Liberation Sans', sans-serif;color:#ececec;letter-spacing:-0.213px;-webkit-text-stroke:0.2px currentColor;">Documents Replies</div><div class="t" style="left:19.50px;top:268.92px;font:normal 11.2px/11.2px 'Liberation Sans', sans-serif;color:#ececec;letter-spacing:0.157px;-webkit-text-stroke:0.2px currentColor;">Document Import</div><div class="t" style="left:19.00px;top:683.00px;font:bold 12.4px/12.4px 'Liberation Sans', sans-serif;color:#ffffff;letter-spacing:0.000px;transform:scaleX(0.8718);transform-origin:0 0;">FILTER</div><div class="t" style="left:19.40px;top:715.32px;font:normal 11.2px/11.2px 'Liberation Sans', sans-serif;color:#eaffdc;letter-spacing:0.073px;-webkit-text-stroke:0.2px currentColor;">Implemented</div><div class="t" style="left:248.80px;top:55.10px;font:bold 12.4px/12.4px 'Liberation Sans', sans-serif;color:#111111;letter-spacing:-0.021px;">Documents</div><div class="t" style="left:320.20px;top:55.10px;font:bold 12.4px/12.4px 'Liberation Sans', sans-serif;color:#333;letter-spacing:0.000px;">-</div><div class="t" style="left:328.40px;top:55.10px;font:normal 12.4px/12.4px 'Liberation Sans', sans-serif;color:#3a3a3a;letter-spacing:0.186px;">Filter 'Implemented' active ↓</div><div class="t" style="left:236.20px;top:88.72px;font:normal 11.2px/11.2px 'Liberation Sans', sans-serif;color:#2a2a2a;letter-spacing:0.118px;-webkit-text-stroke:0.3px currentColor;">Show Document</div><div class="t" style="left:352.10px;top:88.72px;font:normal 11.2px/11.2px 'Liberation Sans', sans-serif;color:#2a2a2a;letter-spacing:-0.056px;-webkit-text-stroke:0.3px currentColor;">Show Objects</div><div class="t" style="left:249.40px;top:120.73px;font:normal 10px/10px 'Liberation Sans', sans-serif;color:#2b2b2b;letter-spacing:-0.003px;">Projects</div><div class="t" style="left:263.20px;top:140.73px;font:normal 10px/10px 'Liberation Sans', sans-serif;color:#2b2b2b;letter-spacing:0.017px;">100 Management System</div><div class="t" style="left:263.20px;top:160.73px;font:normal 10px/10px 'Liberation Sans', sans-serif;color:#2b2b2b;letter-spacing:0.206px;">110 Management Handbook</div><div class="t" style="left:263.20px;top:180.73px;font:normal 10px/10px 'Liberation Sans', sans-serif;color:#2b2b2b;letter-spacing:0.080px;">120 Procedure Instructions</div><div class="t" style="left:263.20px;top:200.73px;font:normal 10px/10px 'Liberation Sans', sans-serif;color:#2b2b2b;letter-spacing:0.067px;">130 Standard Operating Procedures</div><div class="t" style="left:263.20px;top:220.73px;font:normal 10px/10px 'Liberation Sans', sans-serif;color:#2b2b2b;letter-spacing:-0.099px;">140 New Part Process</div><div class="t" style="left:263.20px;top:240.73px;font:normal 10px/10px 'Liberation Sans', sans-serif;color:#2b2b2b;letter-spacing:0.011px;">200 Standards and Regulations</div><div class="t" style="left:263.20px;top:260.74px;font:normal 10px/10px 'Liberation Sans', sans-serif;color:#2b2b2b;letter-spacing:0.148px;">300 Informations</div><div class="t" style="left:263.20px;top:280.74px;font:normal 10px/10px 'Liberation Sans', sans-serif;color:#2b2b2b;letter-spacing:0.065px;">400 Customer Specific Documents</div><div class="t" style="left:263.20px;top:300.74px;font:normal 10px/10px 'Liberation Sans', sans-serif;color:#2b2b2b;letter-spacing:0.075px;">410 Supplier Specific documents</div><div class="t" style="left:263.20px;top:320.74px;font:normal 10px/10px 'Liberation Sans', sans-serif;color:#2b2b2b;letter-spacing:0.063px;">500 Organizational Charts</div><div class="t" style="left:263.20px;top:340.74px;font:normal 10px/10px 'Liberation Sans', sans-serif;color:#2b2b2b;letter-spacing:-0.022px;">600 Drawings</div><div class="t" style="left:263.20px;top:360.74px;font:normal 10px/10px 'Liberation Sans', sans-serif;color:#2b2b2b;letter-spacing:-0.124px;">900 Forms</div><div class="t" style="left:263.20px;top:380.74px;font:normal 10px/10px 'Liberation Sans', sans-serif;color:#2b2b2b;letter-spacing:0.146px;">CAQ-Anwenderworkshop</div><div class="t" style="left:263.20px;top:400.74px;font:normal 10px/10px 'Liberation Sans', sans-serif;color:#2b2b2b;letter-spacing:0.015px;">Documents</div><div class="t" style="left:263.20px;top:420.74px;font:normal 10px/10px 'Liberation Sans', sans-serif;color:#2b2b2b;letter-spacing:-0.215px;">Examples</div><div class="t" style="left:275.40px;top:440.74px;font:normal 10px/10px 'Liberation Sans', sans-serif;color:#2b2b2b;letter-spacing:0.173px;">1 - Directory Structure</div><div class="t" style="left:275.40px;top:460.74px;font:normal 10px/10px 'Liberation Sans', sans-serif;color:#2b2b2b;letter-spacing:0.324px;">2 - Attributes</div><div class="t" style="left:275.40px;top:480.74px;font:normal 10px/10px 'Liberation Sans', sans-serif;color:#2b2b2b;letter-spacing:0.276px;">3 - Multilingualism</div><div class="t" style="left:288.20px;top:500.74px;font:normal 10px/10px 'Liberation Sans', sans-serif;color:#2b2b2b;letter-spacing:0.128px;">3.1 - Variant A- Bilingual</div><div class="t" style="left:288.20px;top:520.74px;font:normal 10px/10px 'Liberation Sans', sans-serif;color:#2b2b2b;letter-spacing:0.093px;">3.2 - Variant B - Bilingual (Columns)</div><div class="t" style="left:288.20px;top:540.74px;font:normal 10px/10px 'Liberation Sans', sans-serif;color:#2b2b2b;letter-spacing:0.202px;">3.3 - Variant C - Monolingual</div><div class="t" style="left:288.20px;top:560.74px;font:normal 10px/10px 'Liberation Sans', sans-serif;color:#2b2b2b;letter-spacing:-0.123px;">3.4 - Examples EN</div><div class="t" style="left:300.90px;top:580.74px;font:normal 10px/10px 'Liberation Sans', sans-serif;color:#ffffff;letter-spacing:0.066px;">3.4.1 Company Policy (Distributed)</div><div class="t" style="left:275.40px;top:600.74px;font:normal 10px/10px 'Liberation Sans', sans-serif;color:#2b2b2b;letter-spacing:0.169px;">4 - Text modules</div><div class="t" style="left:263.20px;top:620.74px;font:normal 10px/10px 'Liberation Sans', sans-serif;color:#2b2b2b;letter-spacing:0.015px;">Templates</div><div class="t" style="left:672.20px;top:118.38px;font:normal 11.6px/11.6px 'Liberation Sans', sans-serif;color:#ffffff;letter-spacing:0.000px;transform:scaleX(0.9352);transform-origin:0 0;-webkit-text-stroke:0.5px currentColor;">Changes</div><div class="t" style="left:748.10px;top:118.28px;font:normal 11.6px/11.6px 'Liberation Sans', sans-serif;color:#333333;letter-spacing:0.000px;transform:scaleX(0.8453);transform-origin:0 0;-webkit-text-stroke:0.35px currentColor;">PDF</div><div class="t" style="left:800.00px;top:118.28px;font:normal 11.6px/11.6px 'Liberation Sans', sans-serif;color:#333333;letter-spacing:0.007px;-webkit-text-stroke:0.35px currentColor;">Original</div><div class="t" style="left:873.00px;top:118.28px;font:normal 11.6px/11.6px 'Liberation Sans', sans-serif;color:#333333;letter-spacing:-0.079px;-webkit-text-stroke:0.35px currentColor;">Further Applicable Documents</div><div class="t" style="left:1059.50px;top:118.28px;font:normal 11.6px/11.6px 'Liberation Sans', sans-serif;color:#333333;letter-spacing:0.000px;transform:scaleX(0.9065);transform-origin:0 0;-webkit-text-stroke:0.35px currentColor;">Jobs</div><div class="t" style="left:1070.31px;top:151.20px;font:normal 10.4px/10.4px 'Liberation Sans', sans-serif;color:#333333;letter-spacing:0.000px;">1</div><div class="t" style="left:1097.00px;top:151.50px;font:normal 10.4px/10.4px 'Liberation Sans', sans-serif;color:#444444;letter-spacing:-0.430px;">von 2</div><div class="t" style="left:919.90px;top:211.13px;font:bold 10px/10px 'Liberation Sans', sans-serif;color:#111111;letter-spacing:-0.085px;-webkit-text-stroke:0.1px currentColor;">Examples</div><div class="t" style="left:919.90px;top:222.94px;font:bold 10px/10px 'Liberation Sans', sans-serif;color:#111111;letter-spacing:-0.001px;-webkit-text-stroke:0.1px currentColor;">3.3.3 Company Policy</div><div class="t" style="left:917.80px;top:259.90px;font:bold 11.46px/11.46px 'Liberation Sans', sans-serif;color:#111111;letter-spacing:-0.036px;-webkit-text-stroke:0.1px currentColor;">1. Distributor</div><div class="t" style="left:917.50px;top:276.58px;font:normal 7.7px/7.7px 'Liberation Sans', sans-serif;color:#222;letter-spacing:-0.001px;-webkit-text-stroke:0.18px currentColor;">Responsible</div><div class="t" style="left:968.30px;top:276.58px;font:normal 7.7px/7.7px 'Liberation Sans', sans-serif;color:#222;letter-spacing:0.000px;-webkit-text-stroke:0.18px currentColor;">M.D.</div><div class="t" style="left:1025.80px;top:276.58px;font:normal 7.7px/7.7px 'Liberation Sans', sans-serif;color:#222;letter-spacing:0.000px;-webkit-text-stroke:0.18px currentColor;">Q</div><div class="t" style="left:1082.40px;top:276.58px;font:normal 7.7px/7.7px 'Liberation Sans', sans-serif;color:#222;letter-spacing:0.000px;-webkit-text-stroke:0.18px currentColor;">All</div><div class="t" style="left:917.50px;top:285.98px;font:normal 7.7px/7.7px 'Liberation Sans', sans-serif;color:#222;letter-spacing:0.000px;-webkit-text-stroke:0.18px currentColor;">Info</div><div class="t" style="left:968.30px;top:285.98px;font:normal 7.7px/7.7px 'Liberation Sans', sans-serif;color:#222;letter-spacing:0.000px;-webkit-text-stroke:0.18px currentColor;">All</div><div class="t" style="left:917.50px;top:303.30px;font:bold 11.46px/11.46px 'Liberation Sans', sans-serif;color:#111111;letter-spacing:0.000px;-webkit-text-stroke:0.1px currentColor;">2. Purpose and application</div><div class="t" style="left:917.50px;top:318.63px;font:normal 7.88px/7.88px 'Liberation Sans', sans-serif;color:#222;letter-spacing:-0.006px;-webkit-text-stroke:0.18px currentColor;">Ensuring processes for the definition, implementation, monitoring and review of the company</div><div class="t" style="left:917.50px;top:327.73px;font:normal 7.88px/7.88px 'Liberation Sans', sans-serif;color:#222;letter-spacing:-0.009px;-webkit-text-stroke:0.18px currentColor;">policy regarding quality, environment, safety and energy at CAQ AG Factory Systems.</div><div class="t" style="left:917.50px;top:345.30px;font:bold 11.46px/11.46px 'Liberation Sans', sans-serif;color:#111111;letter-spacing:-0.108px;-webkit-text-stroke:0.1px currentColor;">3. Terms</div><div class="t" style="left:917.90px;top:360.83px;font:normal 7.88px/7.88px 'Liberation Sans', sans-serif;color:#222;letter-spacing:0.017px;-webkit-text-stroke:0.18px currentColor;">Terms / Abbreviation</div><div class="t" style="left:1005.80px;top:360.83px;font:normal 7.88px/7.88px 'Liberation Sans', sans-serif;color:#222;letter-spacing:0.000px;-webkit-text-stroke:0.18px currentColor;">Description</div><div class="t" style="left:917.90px;top:370.13px;font:normal 7.88px/7.88px 'Liberation Sans', sans-serif;color:#2a3fd0;letter-spacing:0.000px;text-decoration:line-through;-webkit-text-stroke:0.18px currentColor;">Corporate </div><div class="t" style="left:955.50px;top:370.13px;font:normal 7.88px/7.88px 'Liberation Sans', sans-serif;color:#2a3fd0;letter-spacing:-0.117px;text-decoration:underline;-webkit-text-stroke:0.18px currentColor;">Company</div><div class="t" style="left:917.90px;top:379.13px;font:normal 7.88px/7.88px 'Liberation Sans', sans-serif;color:#222;letter-spacing:0.000px;-webkit-text-stroke:0.18px currentColor;">policy</div><div class="t" style="left:1005.80px;top:370.13px;font:normal 7.88px/7.88px 'Liberation Sans', sans-serif;color:#222;letter-spacing:0.000px;-webkit-text-stroke:0.18px currentColor;">The company policy describes the processes of quality,</div><div class="t" style="left:1005.80px;top:379.13px;font:normal 7.88px/7.88px 'Liberation Sans', sans-serif;color:#222;letter-spacing:0.000px;-webkit-text-stroke:0.18px currentColor;">environment, safety and energy in the integrated management</div><div class="t" style="left:1005.80px;top:388.03px;font:normal 7.88px/7.88px 'Liberation Sans', sans-serif;color:#222;letter-spacing:0.000px;-webkit-text-stroke:0.18px currentColor;">system</div><div class="t" style="left:917.50px;top:406.00px;font:bold 11.46px/11.46px 'Liberation Sans', sans-serif;color:#111111;letter-spacing:0.000px;-webkit-text-stroke:0.1px currentColor;">4. Input</div><div class="t" style="left:930.50px;top:421.33px;font:normal 7.88px/7.88px 'Liberation Sans', sans-serif;color:#222;letter-spacing:-0.011px;-webkit-text-stroke:0.18px currentColor;">Requirements of the management system</div><div class="t" style="left:930.50px;top:430.83px;font:normal 7.88px/7.88px 'Liberation Sans', sans-serif;color:#222;letter-spacing:0.040px;-webkit-text-stroke:0.18px currentColor;">Target system</div><div class="t" style="left:917.50px;top:448.70px;font:bold 11.46px/11.46px 'Liberation Sans', sans-serif;color:#111111;letter-spacing:0.000px;-webkit-text-stroke:0.1px currentColor;">5. Output</div><div class="t" style="left:930.50px;top:463.93px;font:normal 7.88px/7.88px 'Liberation Sans', sans-serif;color:#222;letter-spacing:0.000px;-webkit-text-stroke:0.18px currentColor;">Current </div><div class="t" style="left:959.00px;top:463.93px;font:normal 7.88px/7.88px 'Liberation Sans', sans-serif;color:#2a3fd0;letter-spacing:0.000px;text-decoration:line-through;-webkit-text-stroke:0.18px currentColor;">corporate </div><div class="t" style="left:994.50px;top:463.93px;font:normal 7.88px/7.88px 'Liberation Sans', sans-serif;color:#2a3fd0;letter-spacing:0.000px;text-decoration:underline;-webkit-text-stroke:0.18px currentColor;">company </div><div class="t" style="left:1027.50px;top:463.93px;font:normal 7.88px/7.88px 'Liberation Sans', sans-serif;color:#222;letter-spacing:0.000px;-webkit-text-stroke:0.18px currentColor;">policy</div><div class="t" style="left:917.50px;top:481.80px;font:bold 11.46px/11.46px 'Liberation Sans', sans-serif;color:#111111;letter-spacing:-0.008px;-webkit-text-stroke:0.1px currentColor;">6. Process owner</div><div class="t" style="left:930.50px;top:496.33px;font:normal 7.88px/7.88px 'Liberation Sans', sans-serif;color:#222;letter-spacing:-0.018px;-webkit-text-stroke:0.18px currentColor;">Quality management officer</div><div class="t" style="left:930.50px;top:505.13px;font:normal 7.88px/7.88px 'Liberation Sans', sans-serif;color:#222;letter-spacing:-0.026px;-webkit-text-stroke:0.18px currentColor;">Environmental officer</div><div class="t" style="left:930.50px;top:514.33px;font:normal 7.88px/7.88px 'Liberation Sans', sans-serif;color:#222;letter-spacing:-0.016px;-webkit-text-stroke:0.18px currentColor;">Security officer</div><div class="t" style="left:930.50px;top:523.43px;font:normal 7.88px/7.88px 'Liberation Sans', sans-serif;color:#222;letter-spacing:-0.023px;-webkit-text-stroke:0.18px currentColor;">Energy commissioner</div><div class="t" style="left:917.50px;top:550.60px;font:bold 11.46px/11.46px 'Liberation Sans', sans-serif;color:#111111;letter-spacing:-0.044px;-webkit-text-stroke:0.1px currentColor;">7. Process parameter(s)</div><div class="t" style="left:930.50px;top:565.13px;font:normal 7.88px/7.88px 'Liberation Sans', sans-serif;color:#222;letter-spacing:-0.003px;-webkit-text-stroke:0.18px currentColor;">Average oft he audit results oft he audited areas to the point of „company policy“</div><div class="t" style="left:917.50px;top:583.10px;font:bold 11.46px/11.46px 'Liberation Sans', sans-serif;color:#111111;letter-spacing:-0.044px;-webkit-text-stroke:0.1px currentColor;">8. Co-applicable documents</div><div class="t" style="left:917.50px;top:599.03px;font:normal 7.88px/7.88px 'Liberation Sans', sans-serif;color:#222;letter-spacing:0.007px;-webkit-text-stroke:0.18px currentColor;">100 Management System: 1.1 - Mangement</div><div class="t" style="left:917.50px;top:607.73px;font:normal 7.88px/7.88px 'Liberation Sans', sans-serif;color:#222;letter-spacing:-0.000px;-webkit-text-stroke:0.18px currentColor;">100 Management System: 1.3 - Audit</div><div class="t" style="left:928.42px;top:724.77px;font:normal 5.7px/5.7px 'Liberation Sans', sans-serif;color:#222;letter-spacing:0.000px;-webkit-text-stroke:0.05px currentColor;">Version</div><div class="t" style="left:992.51px;top:724.77px;font:normal 5.7px/5.7px 'Liberation Sans', sans-serif;color:#222;letter-spacing:0.000px;-webkit-text-stroke:0.05px currentColor;">Erstellt</div><div class="t" style="left:1077.72px;top:724.77px;font:normal 5.7px/5.7px 'Liberation Sans', sans-serif;color:#222;letter-spacing:0.000px;-webkit-text-stroke:0.05px currentColor;">Geprüft</div><div class="t" style="left:1162.83px;top:724.77px;font:normal 5.7px/5.7px 'Liberation Sans', sans-serif;color:#222;letter-spacing:0.000px;-webkit-text-stroke:0.05px currentColor;">Freigegeben</div><div class="t" style="left:1243.32px;top:724.77px;font:normal 5.7px/5.7px 'Liberation Sans', sans-serif;color:#222;letter-spacing:0.000px;-webkit-text-stroke:0.05px currentColor;">Seite</div><div class="t" style="left:936.32px;top:734.47px;font:normal 5.7px/5.7px 'Liberation Sans', sans-serif;color:#222;letter-spacing:0.000px;-webkit-text-stroke:0.05px currentColor;">2</div><div class="t" style="left:987.18px;top:734.47px;font:normal 5.7px/5.7px 'Liberation Sans', sans-serif;color:#222;letter-spacing:0.000px;-webkit-text-stroke:0.05px currentColor;">23.11.2016</div><div class="t" style="left:1164.78px;top:734.47px;font:normal 5.7px/5.7px 'Liberation Sans', sans-serif;color:#d42020;letter-spacing:0.000px;text-decoration:underline;-webkit-text-stroke:0.05px currentColor;">23.11.2016</div><div class="t" style="left:1240.47px;top:734.47px;font:normal 5.7px/5.7px 'Liberation Sans', sans-serif;color:#222;letter-spacing:0.000px;-webkit-text-stroke:0.05px currentColor;">1 von 2</div><div class="t" style="left:967.25px;top:741.37px;font:normal 5.7px/5.7px 'Liberation Sans', sans-serif;color:#222;letter-spacing:0.012px;-webkit-text-stroke:0.05px currentColor;">Factory Systems, CAQ AG</div><div class="t" style="left:1149.56px;top:741.37px;font:normal 5.7px/5.7px 'Liberation Sans', sans-serif;color:#222;letter-spacing:0.000px;-webkit-text-stroke:0.05px currentColor;">Geschäftsführer, Guido</div><div class="t" style="left:917.50px;top:748.77px;font:bold 5.7px/5.7px 'Liberation Sans', sans-serif;color:#111;letter-spacing:0.012px;-webkit-text-stroke:0.05px currentColor;">Der Ausdruck dieses Dokuments unterliegt nicht dem Änderungsdienst</div>
<svg style="position:absolute;left:620px;top:436px;overflow:visible" width="40" height="40" viewBox="0 0 40 40"><path d="M12.2,3.2 A16.6,16.6 0 0 1 12.2,36.4Z" fill="#fdfdfd"/><rect x="11" y="3.4" width="2.4" height="32.8" fill="#fdfdfd"/><path d="M12.4,3.2 A16.6,16.6 0 0 1 12.4,36.4" fill="none" stroke="#a6a6a6" stroke-width="1.4"/><path d="M16.6,14 L22.4,20 L16.6,26" fill="none" stroke="#3b7fd4" stroke-width="1.3"/></svg>
</body></html>
